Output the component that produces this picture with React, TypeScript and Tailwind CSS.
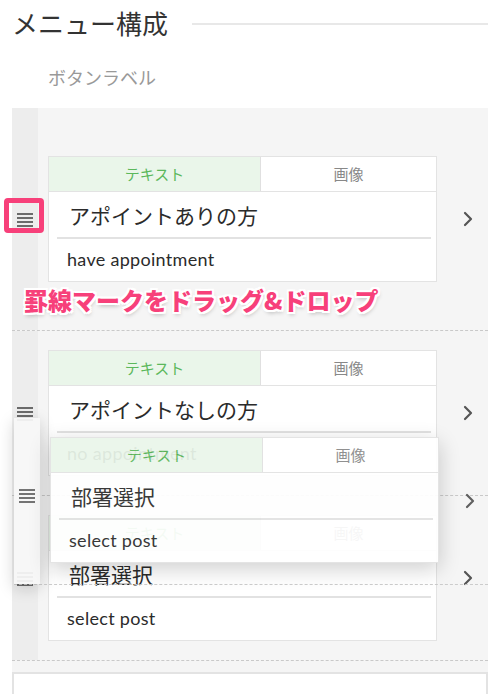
import React from "react";

const FONT = { fontFamily: '"Lato", "Noto Sans CJK JP", sans-serif' };

function Handle() {
  return (
    <svg width="16" height="14" viewBox="0 0 16 14" aria-hidden>
      <rect x="0" y="0" width="16" height="2" fill="#6b6b6b" />
      <rect x="0" y="4" width="16" height="2" fill="#6b6b6b" />
      <rect x="0" y="8" width="16" height="2" fill="#6b6b6b" />
      <rect x="0" y="12" width="16" height="2" fill="#6b6b6b" />
    </svg>
  );
}

function Chevron() {
  return (
    <svg width="24" height="24" viewBox="0 0 24 24" fill="none" stroke="#555" strokeWidth="2.2" strokeLinecap="round" strokeLinejoin="round" aria-hidden>
      <path d="m9 18 6-6-6-6" />
    </svg>
  );
}

function Card({ title, sub, shadow }: { title: string; sub: string; shadow?: boolean }) {
  return (
    <div
      className={
        "w-[389px] bg-white border border-[#e3e3e3] flex flex-col " +
        (shadow ? "shadow-[0_6px_20px_rgba(0,0,0,0.2)]" : "")
      }
    >
      <div className="flex h-[35px] border-b border-[#e3e3e3]">
        <div className="w-[212px] bg-[#eaf6ea] border-r border-[#e0e0e0] flex items-center justify-center text-[15px] text-[#5cb85c]">
          テキスト
        </div>
        <div className="flex-1 flex items-center justify-center text-[15px] text-[#888]">画像</div>
      </div>
      <div className="ml-2 mr-[5px] h-[47px] border-b-2 border-[#e2e2e2] flex items-center pl-3 pt-[3px] text-[21px] text-[#2b2b2b]">
        {title}
      </div>
      <div className="h-[42px] flex items-center pl-[10px] ml-2 pb-[2px] text-[18px] tracking-[0.3px] text-[#2b2b2b]">{sub}</div>
    </div>
  );
}

function Row({
  title,
  sub,
  pt,
  pb,
}: {
  title: string;
  sub: string;
  pt: string;
  pb: string;
}) {
  return (
    <div className="flex border-b border-dashed border-[#c9c9c9]">
      <div className={"w-[26px] bg-[#ededed] flex flex-col " + pt}>
        <div className="h-[128px] flex items-center justify-center">
          <Handle />
        </div>
      </div>
      <div className={"flex-1 flex items-center pl-[10px] " + pt + " " + pb}>
        <Card title={title} sub={sub} />
        <div className="ml-[19px] flex items-center">
          <Chevron />
        </div>
      </div>
    </div>
  );
}

export default function App() {
  return (
    <div className="relative w-[488px] h-[694px] overflow-hidden bg-white" style={FONT}>
      <div className="flex items-center h-[48px] pl-3">
        <div className="text-[26px] leading-[26px] text-[#333]">メニュー構成</div>
        <div className="flex-1 h-[2px] bg-[#e8e8e8] ml-[24px]" />
      </div>
      <div className="h-[60px] flex items-center pl-12 text-[18px] text-[#999]">ボタンラベル</div>

      <div className="ml-3 bg-[#f5f5f5]">
        <Row title="アポイントありの方" sub="have appointment" pt="pt-[48px]" pb="pb-[48px]" />
        <Row title="アポイントなしの方" sub="no appointment" pt="pt-[19px]" pb="pb-[19px]" />
        <Row title="部署選択" sub="select post" pt="pt-[19px]" pb="pb-[19px]" />
        <div className="pt-[11px]">
          <div className="h-[30px] bg-white border-2 border-[#e3e3e3]" />
        </div>
      </div>

      {/* dragged helper */}
      <div className="absolute left-[14px] top-[418px] w-[474px] h-[167px] flex border-b border-dashed border-[#c9c9c9] opacity-[0.93]">
        <div className="w-[26px] bg-[#f8f8f8] shadow-[0_4px_16px_rgba(0,0,0,0.18)] flex flex-col pt-[14px]">
          <div className="h-[128px] flex items-center justify-center">
            <Handle />
          </div>
        </div>
        <div className="flex-1 flex items-start pl-[10px] pt-[19px]">
          <Card title="部署選択" sub="select post" shadow />
          <div className="ml-[19px] h-[128px] flex items-center">
            <Chevron />
          </div>
        </div>
      </div>

      {/* annotation: pink frame */}
      <div className="absolute left-[4px] top-[198px] w-[40px] h-[35px] border-[5px] border-[#f7407a] rounded-[4px]" />

      {/* annotation: text */}
      <div
        className="absolute left-[24px] top-[286px] text-[24px] leading-[28px] font-black text-[#f7407a] whitespace-nowrap"
        style={{
          fontFamily: '"Noto Sans CJK JP", sans-serif',
          textShadow:
            "2px 0 0 #fff, -2px 0 0 #fff, 0 2px 0 #fff, 0 -2px 0 #fff, 2px 2px 0 #fff, -2px -2px 0 #fff, 2px -2px 0 #fff, -2px 2px 0 #fff, 1px 3px 4px rgba(0,0,0,0.25)",
        }}
      >
        罫線マークをドラッグ&ドロップ
      </div>
    </div>
  );
}
